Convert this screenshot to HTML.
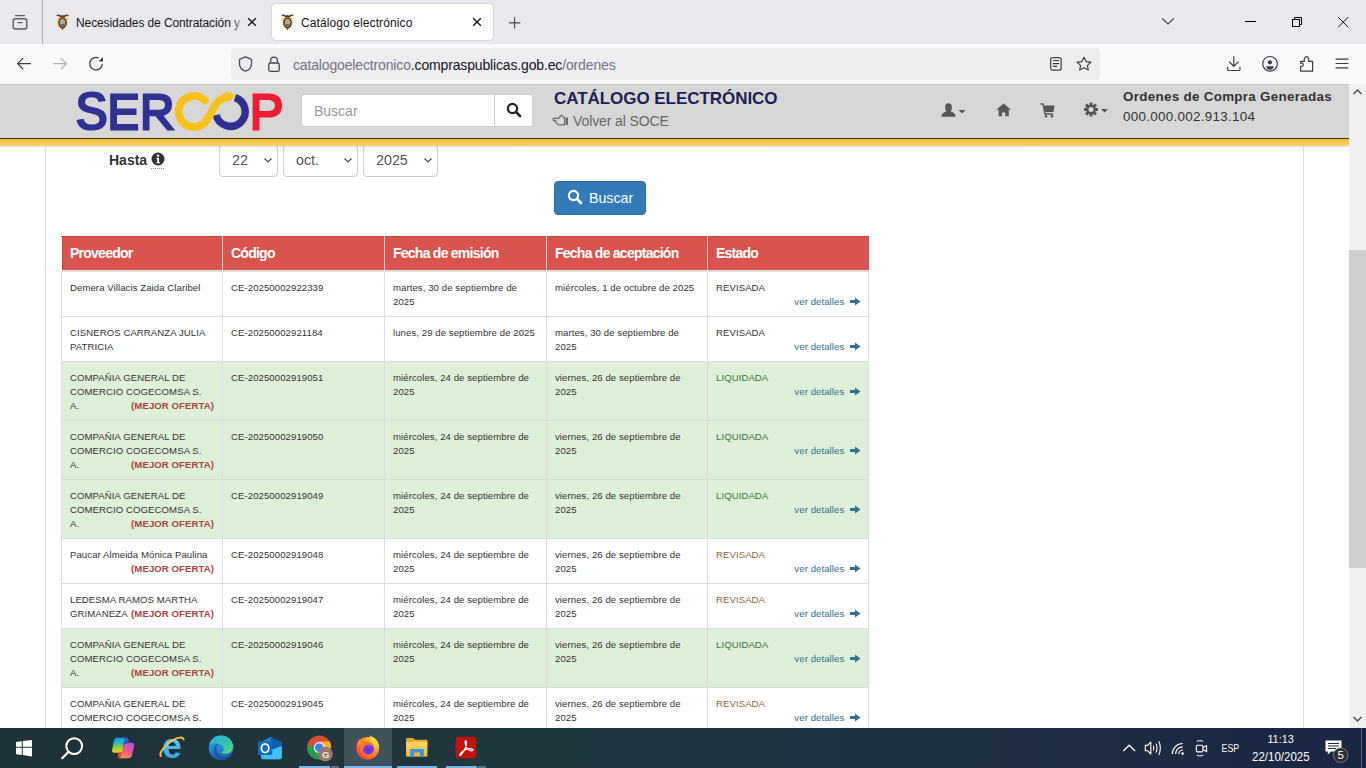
<!DOCTYPE html>
<html><head><meta charset="utf-8">
<style>
*{box-sizing:border-box;margin:0;padding:0}
html,body{width:1366px;height:768px;overflow:hidden;background:#fff;font-family:"Liberation Sans",sans-serif;color:#333}
.abs{position:absolute}
svg{display:block}
#tabs{position:absolute;left:0;top:0;width:1366px;height:44px;background:#e9e9ed}
#nav{position:absolute;left:0;top:44px;width:1366px;height:40px;background:#f9f9fb}
#page{position:absolute;left:0;top:84px;width:1349px;height:644px;background:#fff;overflow:hidden}
#sb{position:absolute;left:1349px;top:84px;width:17px;height:644px;background:#f0f0f0}
#task{position:absolute;left:0;top:728px;width:1366px;height:40px;background:linear-gradient(90deg,#1f3138 0%,#21373e 40%,#1e2e40 75%,#1a2544 100%)}
.tab{position:absolute;font-size:12px;color:#15141a;white-space:nowrap;line-height:14px}
.ico{position:absolute}
#hdr{position:absolute;left:0;top:0;width:1349px;height:55px;background:#d7d7d7;border-top:1px solid #c9c9c9;border-bottom:1px solid #3d3310}
#hdrb{position:absolute;left:0;top:55px;width:1349px;height:7px;background:linear-gradient(#f3bf3a,#fad26a);box-shadow:0 1px 2px rgba(0,0,0,.12)}
table{position:absolute;left:61px;top:152px;border-collapse:collapse;table-layout:fixed}
td,th{border:1px solid #ddd;vertical-align:top;text-align:left;font-size:9.6px;letter-spacing:0.07px;line-height:14px;padding:9.5px 8px 6.5px 8px;color:#333}
th{background:#d9534f;color:#fff;font-size:14px;letter-spacing:-0.75px;font-weight:bold;height:34px;padding:0 8px;vertical-align:middle;border-color:#d9534f;border-right:1px solid #f0c8c7;border-bottom:2px solid #ddd}
th:last-child{border-right-color:#d9534f}
th:first-child{border-left:1px solid #fff}
th{border-top:1px solid #c24845}
th:first-child{box-shadow:inset 1px 0 0 #c24845}
tr.g td{background:#dff0d8}
.vd{display:block;text-align:right;color:#31708f;margin-right:-1px;white-space:nowrap}
.vd svg{display:inline-block;vertical-align:-1px;margin-left:3px}
.mo{color:#a94442;font-weight:bold;float:right}
.st.r{color:#8a6d3b}
.st.l{color:#3c763d}
.sel{position:absolute;top:60px;height:33px;border:1px solid #ccc;border-radius:4px;background:#fff;font-size:14.3px;color:#555;line-height:30px;padding-left:12px}
.sel svg{position:absolute;right:4px;top:12px}
</style></head><body>
<div id="tabs">
  <svg class="ico" style="left:11px;top:13px" width="18" height="18" viewBox="0 0 18 18"><rect x="2.2" y="5.7" width="13.6" height="10.3" rx="2" fill="none" stroke="#5b5b66" stroke-width="1.4"/><path d="M4.5 2.6h9" stroke="#5b5b66" stroke-width="1.4" stroke-linecap="round"/><path d="M7 9.6h4" stroke="#5b5b66" stroke-width="1.4" stroke-linecap="round"/></svg>
  <div class="abs" style="left:42px;top:0;width:1px;height:44px;background:#b0b0b6"></div>
  <svg class="ico" style="left:55px;top:13px" width="15" height="18" viewBox="0 0 15 18"><path d="M0.6 2.3Q3.5 0.6 6.3 2.8L7.5 1.8L8.7 2.8Q11.5 0.6 14.4 2.3Q11.5 2.6 9.5 4.4H5.5Q3.5 2.6 0.6 2.3Z" fill="#5a3a22"/><path d="M2.2 4.5Q1.8 10 3 12Q4.5 15.5 7.5 16Q10.5 15.5 12 12Q13.2 10 12.8 4.5" fill="#f2c94c" opacity="0.75"/><ellipse cx="7.5" cy="9.8" rx="4.3" ry="5.6" fill="#6b2a1a"/><ellipse cx="7.5" cy="9.8" rx="2.9" ry="4" fill="#c9a13c"/><ellipse cx="7.5" cy="9.9" rx="2.2" ry="3.2" fill="#7fb2d6"/><path d="M5.4 11H9.6L9 13H6Z" fill="#4c7a3a"/><path d="M6.2 15.2H8.8L7.5 17.3Z" fill="#b8261d"/></svg>
  <div class="tab" style="left:76px;top:16px;width:166px;overflow:hidden;letter-spacing:-0.1px">Necesidades de Contratación y</div>
  <div class="abs" style="left:232px;top:10px;width:11px;height:24px;background:linear-gradient(90deg,rgba(233,233,237,0.1),rgba(233,233,237,.55) 70%,#e9e9ed)"></div>
  <svg class="ico" style="left:246px;top:16px" width="12" height="12" viewBox="0 0 12 12"><path d="M2.2 2.2L9.8 9.8M9.8 2.2L2.2 9.8" stroke="#15141a" stroke-width="1.35"/></svg>
  <div class="abs" style="left:272px;top:4px;width:221px;height:36px;background:#fff;border-radius:4px;box-shadow:0 0 2px rgba(0,0,0,.25)"></div>
  <svg class="ico" style="left:280px;top:13px" width="15" height="18" viewBox="0 0 15 18"><path d="M0.6 2.3Q3.5 0.6 6.3 2.8L7.5 1.8L8.7 2.8Q11.5 0.6 14.4 2.3Q11.5 2.6 9.5 4.4H5.5Q3.5 2.6 0.6 2.3Z" fill="#5a3a22"/><path d="M2.2 4.5Q1.8 10 3 12Q4.5 15.5 7.5 16Q10.5 15.5 12 12Q13.2 10 12.8 4.5" fill="#f2c94c" opacity="0.75"/><ellipse cx="7.5" cy="9.8" rx="4.3" ry="5.6" fill="#6b2a1a"/><ellipse cx="7.5" cy="9.8" rx="2.9" ry="4" fill="#c9a13c"/><ellipse cx="7.5" cy="9.9" rx="2.2" ry="3.2" fill="#7fb2d6"/><path d="M5.4 11H9.6L9 13H6Z" fill="#4c7a3a"/><path d="M6.2 15.2H8.8L7.5 17.3Z" fill="#b8261d"/></svg>
  <div class="tab" style="left:301px;top:16px;letter-spacing:0.1px">Catálogo electrónico</div>
  <svg class="ico" style="left:471px;top:16px" width="12" height="12" viewBox="0 0 12 12"><path d="M2.2 2.2L9.8 9.8M9.8 2.2L2.2 9.8" stroke="#15141a" stroke-width="1.35"/></svg>
  <svg class="ico" style="left:508px;top:16px" width="14" height="14" viewBox="0 0 14 14"><path d="M6.6 1.2V12.6M0.9 6.9H12.3" stroke="#4a4a52" stroke-width="1.15"/></svg>
  <svg class="ico" style="left:1161px;top:16px" width="14" height="10" viewBox="0 0 14 10"><path d="M1.2 2.5L7 8L12.8 2.5" fill="none" stroke="#4a4a52" stroke-width="1.25"/></svg>
  <div class="abs" style="left:1245px;top:21px;width:11px;height:1px;background:#000"></div>
  <svg class="ico" style="left:1291px;top:16px" width="12" height="12" viewBox="0 0 12 12"><rect x="1.5" y="3.5" width="7" height="7" fill="none" stroke="#000" stroke-width="1"/><path d="M3.5 3.5V1.5H10.5V8.5H8.5" fill="none" stroke="#000" stroke-width="1"/></svg>
  <svg class="ico" style="left:1337px;top:15px" width="13" height="13" viewBox="0 0 13 13"><path d="M1.2 2.2L11.2 12.2M11.2 2.2L1.2 12.2" stroke="#111" stroke-width="1"/></svg>
</div>
<div id="nav">
  <svg class="ico" style="left:15px;top:11px" width="18" height="18" viewBox="0 0 18 18"><path d="M16 8.6H2.8M8.2 3.1L2.6 8.6l5.6 5.6" fill="none" stroke="#3e3e45" stroke-width="1.3" stroke-linejoin="round"/></svg>
  <svg class="ico" style="left:51px;top:11px" width="18" height="18" viewBox="0 0 18 18"><path d="M2 8.6H15.2M9.8 3.1L15.4 8.6l-5.6 5.6" fill="none" stroke="#b0b0b6" stroke-width="1.3" stroke-linejoin="round"/></svg>
  <svg class="ico" style="left:87px;top:11px" width="18" height="18" viewBox="0 0 18 18"><path d="M15.3 8.7A6.3 6.3 0 1 1 11.8 3" fill="none" stroke="#3e3e45" stroke-width="1.3"/><path d="M16 1.9V6.4H11.5Z" fill="#3e3e45"/></svg>
  <div class="abs" style="left:231px;top:4px;width:869px;height:32px;background:#eeeef1;border-radius:4px"></div>
  <svg class="ico" style="left:237px;top:11px" width="17" height="18" viewBox="0 0 17 18"><path d="M8.5 1.8L2.5 4.3v4.2c0 3.8 2.6 6.6 6 7.7 3.4-1.1 6-3.9 6-7.7V4.3Z" fill="none" stroke="#4a4a52" stroke-width="1.3" stroke-linejoin="round"/></svg>
  <svg class="ico" style="left:266px;top:11px" width="16" height="18" viewBox="0 0 16 18"><path d="M4.6 8V5.6a3.4 3.4 0 0 1 6.8 0V8" fill="none" stroke="#4a4a52" stroke-width="1.3"/><rect x="2.8" y="8" width="10.4" height="8.3" rx="1.6" fill="none" stroke="#4a4a52" stroke-width="1.3"/></svg>
  <div class="abs" style="left:293px;top:13px;font-size:14px;line-height:16px;color:#74747c;white-space:nowrap;letter-spacing:-0.15px">catalogoelectronico<span style="color:#15141a">.compraspublicas.gob.ec</span>/ordenes</div>
  <svg class="ico" style="left:1047px;top:11px" width="18" height="18" viewBox="0 0 18 18"><rect x="3.7" y="2.6" width="10.4" height="12.6" rx="2" fill="none" stroke="#3e3e45" stroke-width="1.2"/><path d="M6.3 5.5H11.8M6.3 8.6H11.8M6.3 11.4H9.8" stroke="#3e3e45" stroke-width="1.1" stroke-linecap="round"/></svg>
  <svg class="ico" style="left:1075px;top:11px" width="18" height="18" viewBox="0 0 18 18"><path d="M9 2.3l2.1 4.3 4.7.6-3.4 3.2.9 4.6L9 12.8 4.7 15l.9-4.6L2.2 7.2l4.7-.6Z" fill="none" stroke="#3e3e45" stroke-width="1.2" stroke-linejoin="round"/></svg>
  <svg class="ico" style="left:1224px;top:11px" width="18" height="18" viewBox="0 0 18 18"><path d="M9.8 1.2V11.3M5 6.6L9.8 11.3l4.8-4.7" fill="none" stroke="#3e3e45" stroke-width="1.2" stroke-linejoin="round"/><path d="M3.6 12.1V14.6Q3.6 15.5 4.5 15.5H15.1Q16 15.5 16 14.6V12.1" fill="none" stroke="#3e3e45" stroke-width="1.2"/></svg>
  <svg class="ico" style="left:1261px;top:11px" width="18" height="18" viewBox="0 0 18 18"><circle cx="9" cy="8.8" r="7.3" fill="none" stroke="#3e3e45" stroke-width="1.2"/><circle cx="8.9" cy="7.3" r="2.1" fill="#3e3e45"/><path d="M5.3 11.2H12.6Q12.6 14.6 9 14.8Q5.3 14.6 5.3 11.2Z" fill="#3e3e45"/></svg>
  <svg class="ico" style="left:1297px;top:11px" width="18" height="18" viewBox="0 0 18 18"><path d="M3.6 6.4H7.3Q6.8 3.8 8 2.4Q9.5 1 11 2.4Q12.2 3.8 11.7 6.4H15.6V16.2H3.6V11.3Q6.3 11.6 6.3 9.7Q6.3 7.8 3.6 8.1Z" fill="none" stroke="#3e3e45" stroke-width="1.2" stroke-linejoin="round"/></svg>
  <svg class="ico" style="left:1334px;top:11px" width="16" height="18" viewBox="0 0 16 18"><path d="M2 4.2H14M2 8.5H14M2 12.8H14" stroke="#3e3e45" stroke-width="1.2" stroke-linecap="round"/></svg>
</div>
<div id="page">
  <div class="abs" style="left:45px;top:0;width:1px;height:644px;background:#ddd"></div>
  <div class="abs" style="left:1303px;top:0;width:1px;height:644px;background:#ddd"></div>
  <!-- selects -->
  <div class="sel" style="left:219px;width:59px">22<svg width="10" height="7" viewBox="0 0 10 7"><path d="M1.5 1.5L5 5L8.5 1.5" fill="none" stroke="#444" stroke-width="1.15"/></svg></div>
  <div class="sel" style="left:283px;width:75px">oct.<svg width="10" height="7" viewBox="0 0 10 7"><path d="M1.5 1.5L5 5L8.5 1.5" fill="none" stroke="#444" stroke-width="1.15"/></svg></div>
  <div class="sel" style="left:363px;width:75px">2025<svg width="10" height="7" viewBox="0 0 10 7"><path d="M1.5 1.5L5 5L8.5 1.5" fill="none" stroke="#444" stroke-width="1.15"/></svg></div>
  <div id="hdr">
    <svg class="ico" style="left:72px;top:2px" width="216" height="50" viewBox="72 87 216 50">
      <text transform="translate(75.1 130.2) scale(0.948 1.03)" x="0" y="0" font-family="Liberation Sans" font-weight="bold" font-size="53" fill="#2e3192">S</text>
      <path fill="#2e3192" d="M110.2 93.5H138V100H117V108.4H136.5V115H117V124H138.1V130.4H110.2Z"/>
      <path fill="#2e3192" fill-rule="evenodd" d="M142.8 93.5H159Q172 93.5 172 104.7Q172 113 163.5 115.8L175.3 130.4H167.3L155.5 116.2H149.5V130.4H142.8ZM149.5 100V109.8H158.5Q165 109.8 165 104.9Q165 100 158.5 100Z"/>
      <path fill="none" stroke="#2e3192" stroke-width="7.5" d="M235 97.6A14.7 14.7 0 1 1 216.2 115"/>
      <path fill="none" stroke="#f7c21b" stroke-width="7.8" stroke-linecap="round" d="M205 100.5A15.5 15.5 0 1 0 194 127C204 127 208 119 212 111C216 102 221 97.5 229 96.5"/>
      <path fill="#f7c21b" d="M225 91L236 95.5L227 102.5Z"/>
      <path fill="#ed1c33" fill-rule="evenodd" d="M252.6 93.5H268Q282 93.5 282 105.5Q282 117.6 268 117.6H259.5V130.4H252.6ZM259.5 100V111H267Q275 111 275 105.5Q275 100 267 100Z"/>
    </svg>
    <div class="abs" style="left:301px;top:9px;width:232px;height:33px;background:#fff;border:1px solid #cfcfcf;border-radius:3px"></div>
    <div class="abs" style="left:494px;top:10px;width:1px;height:31px;background:#ccc"></div>
    <div class="abs" style="left:314px;top:18px;font-size:14px;line-height:16px;color:#999">Buscar</div>
    <svg class="ico" style="left:506px;top:17px" width="16" height="16" viewBox="0 0 16 16"><circle cx="6.5" cy="6.5" r="4.6" fill="none" stroke="#222" stroke-width="2.2"/><path d="M10 10L14 14" stroke="#222" stroke-width="2.6" stroke-linecap="round"/></svg>
    <div class="abs" style="left:554px;top:5px;font-size:17px;line-height:18px;font-weight:bold;color:#1f1f55;white-space:nowrap;letter-spacing:-0.05px">CATÁLOGO ELECTRÓNICO</div>
    <svg class="ico" style="left:552px;top:29px" width="17" height="12" viewBox="0 0 17 12"><path d="M1 5.6Q1 4.3 2.3 4.3H6.6L8.6 1.8Q9.4 1 10.2 1.8L11.8 3.6H12.6V10.8H7.6Q6.4 10.8 5.6 10.1L4.8 9.3Q3.9 9.2 3.9 8.3V6.8H2.3Q1 6.8 1 5.6Z" fill="none" stroke="#666" stroke-width="1.15" stroke-linejoin="round"/><rect x="13.6" y="3.6" width="2.4" height="7.2" fill="#666"/></svg>
    <div class="abs" style="left:573px;top:29px;font-size:14px;letter-spacing:-0.1px;line-height:14px;color:#666;white-space:nowrap">Volver al SOCE</div>
    <!-- right icons -->
    <svg class="ico" style="left:941px;top:18px" width="26" height="15" viewBox="0 0 26 15"><path d="M5.3 8.6Q4.1 7.2 4.1 4.5Q4.1 0.3 7.5 0.3Q10.9 0.3 10.9 4.5Q10.9 7.2 9.7 8.6Q14.2 9.6 14.6 13.8H0.4Q0.8 9.6 5.3 8.6Z" fill="#585858"/><path d="M17.5 7H24.5L21 10.5Z" fill="#585858"/></svg>
    <svg class="ico" style="left:996px;top:17px" width="16" height="15" viewBox="0 0 16 15"><path d="M7.7 1.5L15 7.8H12.8V14.2H9.3V10.4H6V14.2H2.6V7.8H0.3Z" fill="#585858"/></svg>
    <svg class="ico" style="left:1040px;top:17.5px" width="15" height="15" viewBox="0 0 15 15"><path d="M0.5 1H3L5 11H13" fill="none" stroke="#555" stroke-width="1.4"/><path d="M3.5 2.5H14.5L13.5 9H4.8Z" fill="#555"/><circle cx="6" cy="13.2" r="1.3" fill="#555"/><circle cx="12" cy="13.2" r="1.3" fill="#555"/></svg>
    <svg class="ico" style="left:1084px;top:17px" width="25" height="15" viewBox="0 0 25 15"><g transform="translate(7 7.5)" fill="#555"><circle r="4.8"/><rect x="-1.5" y="-7" width="3" height="14"/><rect x="-1.5" y="-7" width="3" height="14" transform="rotate(45)"/><rect x="-1.5" y="-7" width="3" height="14" transform="rotate(90)"/><rect x="-1.5" y="-7" width="3" height="14" transform="rotate(135)"/></g><circle cx="7" cy="7.5" r="2.5" fill="#d7d7d7"/><path d="M17 7H24L20.5 10.5Z" fill="#555"/></svg>
    <div class="abs" style="left:1123px;top:5px;font-size:13.4px;line-height:14px;font-weight:bold;color:#333;white-space:nowrap;letter-spacing:0.3px">Ordenes de Compra Generadas</div>
    <div class="abs" style="left:1123px;top:25px;font-size:13.4px;line-height:14px;color:#333;white-space:nowrap;letter-spacing:0.3px">000.000.002.913.104</div>
  </div>
  <div id="hdrb"></div>
  <div class="abs" style="left:109px;top:68px;font-size:14px;line-height:16px;font-weight:bold;color:#333">Hasta</div>
  <svg class="ico" style="left:151px;top:68px" width="14" height="14" viewBox="0 0 14 14"><circle cx="7" cy="7" r="6.5" fill="#333"/><circle cx="7" cy="3.8" r="1.2" fill="#fff"/><path d="M5.3 6H8V10.3H9V11.3H5.3V10.3H6.3V7H5.3Z" fill="#fff"/></svg>
  <div class="abs" style="left:151px;top:84px;width:13px;border-top:1px dotted #888"></div>
  <div class="abs" style="left:554px;top:97px;width:92px;height:34px;background:#337ab7;border:1px solid #2e6da4;border-radius:4px"></div>
  <svg class="ico" style="left:567px;top:105px" width="16" height="16" viewBox="0 0 16 16"><circle cx="6.5" cy="6.5" r="4.6" fill="none" stroke="#fff" stroke-width="2.2"/><path d="M10 10L14 14" stroke="#fff" stroke-width="2.6" stroke-linecap="round"/></svg>
  <div class="abs" style="left:589px;top:106px;font-size:14.2px;line-height:16px;color:#fff">Buscar</div>
  <table>
    <colgroup><col style="width:161px"><col style="width:162px"><col style="width:162px"><col style="width:161px"><col style="width:161px"></colgroup>
    <tr><th>Proveedor</th><th>Código</th><th>Fecha de emisión</th><th>Fecha de aceptación</th><th>Estado</th></tr>
<tr><td>Demera Villacis Zaida Claribel</td><td>CE-20250002922339</td><td>martes, 30 de septiembre de 2025</td><td>miércoles, 1 de octubre de 2025</td><td><span class="st d">REVISADA</span><a class="vd">ver detalles <svg width="11" height="9" viewBox="0 0 11 9"><path d="M0 3H5V0.5L10.5 4.5L5 8.5V6H0Z" fill="#31708f"/></svg></a></td></tr>
<tr><td>CISNEROS CARRANZA JULIA PATRICIA</td><td>CE-20250002921184</td><td>lunes, 29 de septiembre de 2025</td><td>martes, 30 de septiembre de 2025</td><td><span class="st d">REVISADA</span><a class="vd">ver detalles <svg width="11" height="9" viewBox="0 0 11 9"><path d="M0 3H5V0.5L10.5 4.5L5 8.5V6H0Z" fill="#31708f"/></svg></a></td></tr>
<tr class="g"><td>COMPAÑIA GENERAL DE COMERCIO COGECOMSA S.<br>A.<span class="mo">(MEJOR OFERTA)</span></td><td>CE-20250002919051</td><td>miércoles, 24 de septiembre de 2025</td><td>viernes, 26 de septiembre de 2025</td><td><span class="st l">LIQUIDADA</span><a class="vd">ver detalles <svg width="11" height="9" viewBox="0 0 11 9"><path d="M0 3H5V0.5L10.5 4.5L5 8.5V6H0Z" fill="#31708f"/></svg></a></td></tr>
<tr class="g"><td>COMPAÑIA GENERAL DE COMERCIO COGECOMSA S.<br>A.<span class="mo">(MEJOR OFERTA)</span></td><td>CE-20250002919050</td><td>miércoles, 24 de septiembre de 2025</td><td>viernes, 26 de septiembre de 2025</td><td><span class="st l">LIQUIDADA</span><a class="vd">ver detalles <svg width="11" height="9" viewBox="0 0 11 9"><path d="M0 3H5V0.5L10.5 4.5L5 8.5V6H0Z" fill="#31708f"/></svg></a></td></tr>
<tr class="g"><td>COMPAÑIA GENERAL DE COMERCIO COGECOMSA S.<br>A.<span class="mo">(MEJOR OFERTA)</span></td><td>CE-20250002919049</td><td>miércoles, 24 de septiembre de 2025</td><td>viernes, 26 de septiembre de 2025</td><td><span class="st l">LIQUIDADA</span><a class="vd">ver detalles <svg width="11" height="9" viewBox="0 0 11 9"><path d="M0 3H5V0.5L10.5 4.5L5 8.5V6H0Z" fill="#31708f"/></svg></a></td></tr>
<tr><td>Paucar Almeida Mónica Paulina<span class="mo">(MEJOR OFERTA)</span></td><td>CE-20250002919048</td><td>miércoles, 24 de septiembre de 2025</td><td>viernes, 26 de septiembre de 2025</td><td><span class="st r">REVISADA</span><a class="vd">ver detalles <svg width="11" height="9" viewBox="0 0 11 9"><path d="M0 3H5V0.5L10.5 4.5L5 8.5V6H0Z" fill="#31708f"/></svg></a></td></tr>
<tr><td>LEDESMA RAMOS MARTHA GRIMANEZA<span class="mo">(MEJOR OFERTA)</span></td><td>CE-20250002919047</td><td>miércoles, 24 de septiembre de 2025</td><td>viernes, 26 de septiembre de 2025</td><td><span class="st r">REVISADA</span><a class="vd">ver detalles <svg width="11" height="9" viewBox="0 0 11 9"><path d="M0 3H5V0.5L10.5 4.5L5 8.5V6H0Z" fill="#31708f"/></svg></a></td></tr>
<tr class="g"><td>COMPAÑIA GENERAL DE COMERCIO COGECOMSA S.<br>A.<span class="mo">(MEJOR OFERTA)</span></td><td>CE-20250002919046</td><td>miércoles, 24 de septiembre de 2025</td><td>viernes, 26 de septiembre de 2025</td><td><span class="st l">LIQUIDADA</span><a class="vd">ver detalles <svg width="11" height="9" viewBox="0 0 11 9"><path d="M0 3H5V0.5L10.5 4.5L5 8.5V6H0Z" fill="#31708f"/></svg></a></td></tr>
<tr><td>COMPAÑIA GENERAL DE COMERCIO COGECOMSA S.<br>A.<span class="mo">(MEJOR OFERTA)</span></td><td>CE-20250002919045</td><td>miércoles, 24 de septiembre de 2025</td><td>viernes, 26 de septiembre de 2025</td><td><span class="st r">REVISADA</span><a class="vd">ver detalles <svg width="11" height="9" viewBox="0 0 11 9"><path d="M0 3H5V0.5L10.5 4.5L5 8.5V6H0Z" fill="#31708f"/></svg></a></td></tr>
  </table>
</div>
<div id="sb">
  <svg class="ico" style="left:3px;top:4px" width="11" height="8" viewBox="0 0 11 8"><path d="M1.5 6L5.5 2L9.5 6" fill="none" stroke="#505050" stroke-width="1.5"/></svg>
  <div class="abs" style="left:0;top:166px;width:17px;height:318px;background:#cdcdcd"></div>
  <svg class="ico" style="left:3px;top:631px" width="11" height="8" viewBox="0 0 11 8"><path d="M1.5 2L5.5 6L9.5 2" fill="none" stroke="#505050" stroke-width="1.5"/></svg>
</div>
<div id="task">
  <svg class="ico" style="left:0;top:0" width="1366" height="40" viewBox="0 728 1366 40">
    <defs>
      <linearGradient id="cop1" x1="0" y1="0" x2="0" y2="1"><stop offset="0" stop-color="#1a9cf0"/><stop offset="0.3" stop-color="#22b0d8"/><stop offset="0.62" stop-color="#8cd23a"/><stop offset="1" stop-color="#f2d21a"/></linearGradient><linearGradient id="ieg" x1="0" y1="0" x2="0" y2="1"><stop offset="0" stop-color="#7fdcfa"/><stop offset="1" stop-color="#1e9be0"/></linearGradient>
      <linearGradient id="cop2" x1="0.8" y1="0" x2="0.3" y2="1"><stop offset="0" stop-color="#b44ee6"/><stop offset="0.55" stop-color="#f25888"/><stop offset="1" stop-color="#ffa040"/></linearGradient>
      <linearGradient id="edg" x1="0" y1="0" x2="0.3" y2="1"><stop offset="0" stop-color="#3aa6ec"/><stop offset="0.6" stop-color="#1e86dc"/><stop offset="1" stop-color="#1a5fb4"/></linearGradient>
      <linearGradient id="edg2" x1="0" y1="0" x2="1" y2="1"><stop offset="0" stop-color="#2ab0d8"/><stop offset="0.6" stop-color="#35c4a8"/><stop offset="1" stop-color="#6fdc5a"/></linearGradient>
      <radialGradient id="ff1" cx="0.75" cy="0.25" r="0.95"><stop offset="0" stop-color="#ffe04a"/><stop offset="0.4" stop-color="#ff9f22"/><stop offset="0.75" stop-color="#ff5a2e"/><stop offset="1" stop-color="#e8225a"/></radialGradient>
      <radialGradient id="ff2" cx="0.5" cy="0.6" r="0.6"><stop offset="0" stop-color="#5a2bd0"/><stop offset="1" stop-color="#a044e0"/></radialGradient>
      <linearGradient id="fold" x1="0" y1="0" x2="0" y2="1"><stop offset="0" stop-color="#ffd868"/><stop offset="1" stop-color="#f0b93a"/></linearGradient>
    </defs>
    <!-- windows -->
    <path fill="#fff" d="M16 741.9L21.8 741.2V746.8H16ZM22.8 741.1L32 739.9V746.8H22.8ZM16 747.8H21.8V754.9L16 754.2ZM22.8 747.8H32V756.4L22.8 755.1Z"/>
    <!-- search -->
    <circle cx="74.2" cy="746.1" r="7.9" fill="none" stroke="#fff" stroke-width="2"/>
    <path d="M68.6 751.8L62.2 758.2" stroke="#fff" stroke-width="2.1" stroke-linecap="round"/>
    <!-- copilot -->
    <path fill="url(#cop1)" d="M114.6 739.1Q115.8 737.8 118.3 737.8H126.7Q128.8 738.3 128.3 741.6L123.8 743.3L122.5 751.2Q121.7 752.8 119.2 752.8H114.2Q111.7 752.4 112.1 749.9L113.8 741.6Z"/>
    <path fill="#2a58d6" d="M122.5 737.8H126.7Q128.8 738.3 128.3 741.6L126.5 743L123.8 743.3L124.8 739.5Q123.8 738.3 122.5 737.8Z"/>
    <path fill="url(#cop2)" d="M125.8 743.3Q126.7 742.8 128.3 742.8H132.5Q134.6 743.3 134.2 745.8L131.7 756.2Q130.8 758.3 128.3 758.3H119.2Q117.5 757.8 117.9 755.8L118.8 752.4Q119.6 752 121.7 752L124.2 744.5Z"/>
    <path fill="#e8402c" d="M118.8 752.4Q119.6 752 121.7 752L120.6 758.3H119.2Q117.5 757.8 117.9 755.8Z"/>
    <!-- IE -->
    <text x="162.3" y="757.8" font-family="Liberation Sans" font-weight="bold" font-size="35" fill="url(#ieg)">e</text>
    <path fill="none" stroke="#f3c53a" stroke-width="1.9" d="M161.5 756.5A14.2 5.2 -38 1 1 183.6 740.2"/>
    <!-- edge -->
    <circle cx="221" cy="747.7" r="12.3" fill="url(#edg)"/>
    <path fill="url(#edg2)" d="M209.5 744.5Q212 735.4 221 735.4Q230 735.4 233.3 745Q233.5 751.5 228 753.5Q224 754.5 221 752.5Q226 750 222 745.5Q217 741.5 209.5 744.5Z"/>
    <path fill="#1e3a66" opacity="0.45" d="M213.5 751Q213 744.5 219 743.6Q214.5 747.5 218.5 753.5Q222.5 758.8 230 757Q225 760.6 219 759.5Q213.8 757 213.5 751Z"/>
    <!-- outlook -->
    <path fill="#1c8ad8" d="M261 742.2L270.6 736.8L281.8 742.4V757Q281.8 759.2 279.6 759.2H263.2Q261 759.2 261 757Z"/>
    <path fill="#3fc3f3" d="M261 749.5L281.8 744.5V757Q281.8 759.2 279.6 759.2H263.2Q261 759.2 261 757Z"/>
    <path fill="#0c5db0" d="M270.6 737L281.8 742.5V746L271 750Z"/>
    <rect x="258" y="741.3" width="14.3" height="13.8" rx="1.6" fill="#0f6cc4"/>
    <ellipse cx="265.1" cy="748.2" rx="3.7" ry="4.3" fill="none" stroke="#fff" stroke-width="1.7"/>
    <!-- chrome -->
    <circle cx="319.2" cy="747.6" r="12" fill="#dc4a3a"/>
    <path fill="#1f9e54" d="M307.2 747.6A12 12 0 0 0 319.2 759.6L325 749.6L313.4 744.4Z"/>
    <path fill="#f5b716" d="M331.2 747.6A12 12 0 0 0 329.6 741.6H319.2L325 749.6Z"/>
    <circle cx="319.2" cy="747.6" r="5.5" fill="#fff"/>
    <circle cx="319.2" cy="747.6" r="4.3" fill="#3f7fe8"/>
    <circle cx="325.4" cy="754.1" r="7.4" fill="#957a6c"/>
    <text x="322" y="757.8" font-family="Liberation Sans" font-weight="bold" font-size="9.5" fill="#f4ecea">G</text>
    <!-- firefox active -->
    <rect x="344" y="728" width="48" height="40" fill="#3f5259"/>
    <circle cx="367.6" cy="748.3" r="11.4" fill="url(#ff1)"/>
    <path fill="#ffd33a" d="M369.5 735.4Q380 739 379.2 749.5Q377.5 742 371.5 741.2Z"/>
    <circle cx="368.4" cy="749" r="5.8" fill="url(#ff2)"/>
    <path fill="#ff7426" d="M359.5 743.5Q362.5 740.8 367.5 741.5Q372.5 742.3 373.8 746Q369.5 743.8 365.8 745.3Q363.3 746.5 362.8 749.5Q360.5 747.5 359.5 743.5Z"/>
    <path fill="#ff9a2a" d="M357 746Q357.5 740.5 360.5 738.8Q359.8 741.5 361 743Z"/>
    <!-- folder -->
    <path fill="#e3a92a" d="M406.1 739.2Q406.1 738 407.3 738H413.2L415 739.8H427.4V745H406.1Z"/>
    <rect x="406.1" y="741.8" width="21.3" height="14.8" fill="url(#fold)"/>
    <path fill="#3d93dc" d="M410.1 756.6V749H423.8V756.6H419.8V752.5H414.2V756.6Z"/>
    <!-- acrobat -->
    <rect x="455.6" y="736.8" width="20.5" height="21.4" rx="3.2" fill="#c2140b"/>
    <path fill="none" stroke="#fff" stroke-width="1.2" stroke-linejoin="round" d="M460 754.3Q461.5 751 466.5 749.2Q471 748 473 749.8Q472.8 751.5 469.3 750.3Q466 748.5 465.2 743.6Q464.8 740.3 466 741Q467.3 742.5 465.6 747.2Q463.8 751.8 460.8 755.2Q459.5 755.8 460 754.3Z"/>
    <!-- underlines -->
    <rect x="299" y="766" width="31" height="2" fill="#7ab4e6"/>
    <rect x="331" y="766" width="8" height="2" fill="#56738c"/>
    <rect x="344" y="766" width="48" height="2" fill="#7ab8ea"/>
    <rect x="397" y="766" width="40" height="2" fill="#7ab4e6"/>
    <rect x="446" y="766" width="31" height="2" fill="#7ab4e6"/>
    <rect x="478" y="766" width="8" height="2" fill="#56738c"/>
    <!-- tray -->
    <path d="M1123.3 751L1129.2 745.2L1135.1 751" fill="none" stroke="#fff" stroke-width="1.2"/>
    <path d="M1145.3 745.4H1147.6L1150.8 742.2V754L1147.6 750.8H1145.3Z" fill="none" stroke="#fff" stroke-width="1.1" stroke-linejoin="round"/>
    <path d="M1153.3 745.8Q1154.4 748.1 1153.3 750.4M1156 743.6Q1158 748.1 1156 752.6M1158.8 741.2Q1161.8 748.1 1158.8 755" fill="none" stroke="#fff" stroke-width="1.1"/>
    <path d="M1178.8 754A4 4 0 0 1 1182.8 750M1175.6 754A7.2 7.2 0 0 1 1182.8 746.8M1172.3 754A10.5 10.5 0 0 1 1182.8 743.5" fill="none" stroke="#fff" stroke-width="1.2"/>
    <circle cx="1182.6" cy="753.6" r="1.3" fill="#fff"/>
    <path d="M1196.8 741.3Q1199.6 739.9 1203.2 741.3M1196.8 755.3Q1199.6 756.7 1203.2 755.3" fill="none" stroke="#fff" stroke-width="1"/>
    <rect x="1196.3" y="745.3" width="6.6" height="6.6" rx="1.2" fill="none" stroke="#fff" stroke-width="1.1"/>
    <path d="M1203 747.6L1206.6 745.6V751.6L1203 749.6" fill="none" stroke="#fff" stroke-width="1.1"/>
    <text x="1221.5" y="752.3" font-family="Liberation Sans" font-size="11.6" textLength="17.8" lengthAdjust="spacingAndGlyphs" fill="#fff">ESP</text>
    <text x="1267.4" y="742.9" font-family="Liberation Sans" font-size="11.8" textLength="26.3" lengthAdjust="spacingAndGlyphs" fill="#fff">11:13</text>
    <text x="1252" y="760.5" font-family="Liberation Sans" font-size="12.2" textLength="57.6" lengthAdjust="spacingAndGlyphs" fill="#fff">22/10/2025</text>
    <path d="M1325.5 740.5H1341.5V751.5H1331L1327.8 754.5V751.5H1325.5Z" fill="#fff"/>
    <path d="M1328 743.5H1339M1328 746H1339M1328 748.5H1336" stroke="#1b2844" stroke-width="1"/>
    <circle cx="1340.7" cy="755.2" r="7.3" fill="#2e2e30" stroke="#77777a" stroke-width="1"/>
    <text x="1340.7" y="759.3" text-anchor="middle" font-family="Liberation Sans" font-size="11.5" fill="#fff">5</text>
    <rect x="1361" y="728" width="1" height="40" fill="#55607a"/>
  </svg>
</div>
</body></html>
